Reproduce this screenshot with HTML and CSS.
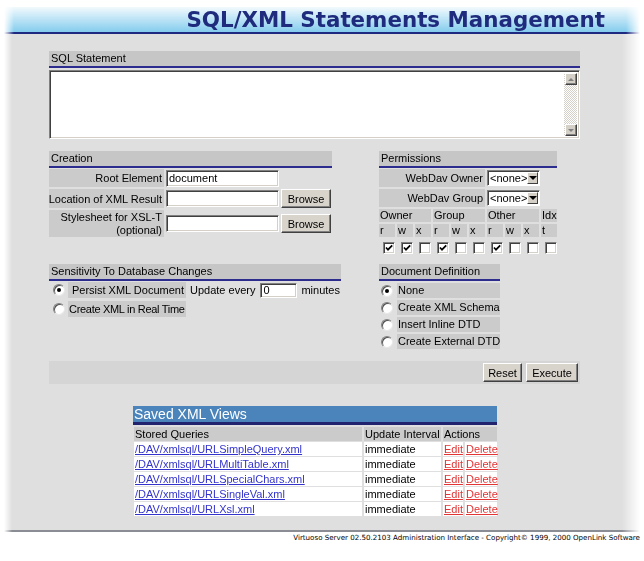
FILE: index.html
```html
<!DOCTYPE html>
<html>
<head>
<meta charset="utf-8">
<title>SQL/XML Statements Management</title>
<link rel="stylesheet" href="styles.css">
</head>
<body>
<div class="header"><h1 class="title">SQL/XML Statements Management</h1></div>
<div class="panel">
  <section class="sql">
    <div class="bar">SQL Statement</div>
    <div class="textarea">
      <textarea class="ta"></textarea>
      <div class="vscroll">
        <span class="sbtn"><span class="tri up"></span></span>
        <span class="track"></span>
        <span class="sbtn"><span class="tri down"></span></span>
      </div>
    </div>
  </section>

  <div class="grid">
    <section class="creation">
      <div class="bar">Creation</div>
      <div class="form">
        <div class="lbl">Root Element</div>
        <div class="cell"><input class="text" value="document"></div>
        <div class="cell"></div>
        <div class="lbl">Location of XML Result</div>
        <div class="cell"><input class="text"></div>
        <div class="cell"><button class="btn browse">Browse</button></div>
        <div class="lbl two">Stylesheet for XSL-T<br>(optional)</div>
        <div class="cell"><input class="text"></div>
        <div class="cell"><button class="btn browse">Browse</button></div>
      </div>
    </section>

    <section class="perms">
      <div class="bar">Permissions</div>
      <div class="perm-grid">
        <div class="pl">WebDav Owner</div>
        <div class="ps"><div class="select"><span class="sv">&lt;none&gt;</span><span class="sa"><span class="tri down dark"></span></span></div></div>
        <div class="pl">WebDav Group</div>
        <div class="ps"><div class="select"><span class="sv">&lt;none&gt;</span><span class="sa"><span class="tri down dark"></span></span></div></div>
        <div class="pc s3">Owner</div>
        <div class="pc s3">Group</div>
        <div class="pc s3">Other</div>
        <div class="pc">Idx</div>
        <div class="pc">r</div><div class="pc">w</div><div class="pc">x</div>
        <div class="pc">r</div><div class="pc">w</div><div class="pc">x</div>
        <div class="pc">r</div><div class="pc">w</div><div class="pc">x</div>
        <div class="pc">t</div>
        <div class="pk"><span class="cb"><svg viewBox="0 0 10 10" width="10" height="10"><path d="M2 4.5 L4 6.7 L8.2 2.3" fill="none" stroke="#000" stroke-width="1.7"/></svg></span></div>
        <div class="pk"><span class="cb"><svg viewBox="0 0 10 10" width="10" height="10"><path d="M2 4.5 L4 6.7 L8.2 2.3" fill="none" stroke="#000" stroke-width="1.7"/></svg></span></div>
        <div class="pk"><span class="cb"></span></div>
        <div class="pk"><span class="cb"><svg viewBox="0 0 10 10" width="10" height="10"><path d="M2 4.5 L4 6.7 L8.2 2.3" fill="none" stroke="#000" stroke-width="1.7"/></svg></span></div>
        <div class="pk"><span class="cb"></span></div>
        <div class="pk"><span class="cb"></span></div>
        <div class="pk"><span class="cb"><svg viewBox="0 0 10 10" width="10" height="10"><path d="M2 4.5 L4 6.7 L8.2 2.3" fill="none" stroke="#000" stroke-width="1.7"/></svg></span></div>
        <div class="pk"><span class="cb"></span></div>
        <div class="pk"><span class="cb"></span></div>
        <div class="pk"><span class="cb"></span></div>
      </div>
    </section>

    <section class="sens">
      <div class="bar">Sensitivity To Database Changes</div>
      <div class="sens-grid">
        <div class="rc"><span class="radio on"></span></div>
        <div class="lbl">Persist XML Document</div>
        <div class="upd">Update every <input class="text small" value="0"> minutes</div>
        <div class="rc"><span class="radio"></span></div>
        <div class="lbl tight">Create XML in Real Time</div>
        <div></div>
      </div>
    </section>

    <section class="docdef">
      <div class="bar">Document Definition</div>
      <div class="dd-grid">
        <div class="rc"><span class="radio on"></span></div><div class="dl">None</div>
        <div class="rc"><span class="radio"></span></div><div class="dl">Create XML Schema</div>
        <div class="rc"><span class="radio"></span></div><div class="dl">Insert Inline DTD</div>
        <div class="rc"><span class="radio"></span></div><div class="dl">Create External DTD</div>
      </div>
    </section>
  </div>

  <div class="actions">
    <button class="btn reset">Reset</button>
    <button class="btn exec">Execute</button>
  </div>

  <section class="saved">
    <div class="saved-title">Saved XML Views</div>
    <div class="saved-grid">
      <div class="sh">Stored Queries</div>
      <div class="sh">Update Interval</div>
      <div class="sh s2">Actions</div>

      <div class="sd"><a href="#">/DAV/xmlsql/URLSimpleQuery.xml</a></div>
      <div class="sd">immediate</div>
      <div class="sd"><a class="red" href="#">Edit</a></div>
      <div class="sd"><a class="red" href="#">Delete</a></div>

      <div class="sd"><a href="#">/DAV/xmlsql/URLMultiTable.xml</a></div>
      <div class="sd">immediate</div>
      <div class="sd"><a class="red" href="#">Edit</a></div>
      <div class="sd"><a class="red" href="#">Delete</a></div>

      <div class="sd"><a href="#">/DAV/xmlsql/URLSpecialChars.xml</a></div>
      <div class="sd">immediate</div>
      <div class="sd"><a class="red" href="#">Edit</a></div>
      <div class="sd"><a class="red" href="#">Delete</a></div>

      <div class="sd"><a href="#">/DAV/xmlsql/URLSingleVal.xml</a></div>
      <div class="sd">immediate</div>
      <div class="sd"><a class="red" href="#">Edit</a></div>
      <div class="sd"><a class="red" href="#">Delete</a></div>

      <div class="sd"><a href="#">/DAV/xmlsql/URLXsl.xml</a></div>
      <div class="sd">immediate</div>
      <div class="sd"><a class="red" href="#">Edit</a></div>
      <div class="sd"><a class="red" href="#">Delete</a></div>
    </div>
  </section>
</div>
<div class="footer">Virtuoso Server 02.50.2103 Administration Interface - Copyright© 1999, 2000 OpenLink Software</div>
</body>
</html>
```

FILE: styles.css
```css
* { box-sizing: border-box; }
body {
  margin: 0;
  background: #fff;
  font-family: "Liberation Sans", Arial, sans-serif;
  font-size: 11px;
  color: #000;
}
.header {
  margin: 7px 4px 0;
  height: 27px;
  background: linear-gradient(#f2fafd, #84ccee);
  border-bottom: 2px solid #1e2a80;
  padding-right: 35px;
  text-align: right;
  -webkit-mask-image: linear-gradient(to right, transparent 0, #000 10px, #000 calc(100% - 14px), transparent 100%);
  mask-image: linear-gradient(to right, transparent 0, #000 10px, #000 calc(100% - 14px), transparent 100%);
}
.title {
  margin: 0;
  font: bold 21.4px/25px "DejaVu Sans", Verdana, sans-serif;
  color: #1f2b7d;
}
.panel {
  margin: 0 4px;
  background: #dfdfdf;
  border-bottom: 2px solid #8a8e94;
  padding: 17px 0 14px 45px;
  -webkit-mask-image: linear-gradient(to right, transparent 0, #000 8px, #000 calc(100% - 18px), transparent 100%);
  mask-image: linear-gradient(to right, transparent 0, #000 8px, #000 calc(100% - 18px), transparent 100%);
}
.bar {
  height: 17px;
  background: #c6c6c6;
  border-bottom: 2px solid #2c2c8e;
  padding: 0 2px;
  line-height: 15px;
}
.sql { width: 531px; }
.textarea {
  margin-top: 2px;
  height: 69px;
  display: flex;
  background: #fff;
  border: 1px solid;
  border-color: #808080 #fff #fff #808080;
  box-shadow: inset 1px 1px #404040, inset -1px -1px #d4d0c8;
  padding: 2px;
}
.ta {
  flex: 1;
  border: 0;
  resize: none;
  outline: none;
  background: transparent;
  font: 11px "Liberation Mono", monospace;
}
.vscroll {
  width: 13px;
  display: flex;
  flex-direction: column;
  align-items: center;
  background: repeating-conic-gradient(#d4d0c8 0 25%, #fff 0 50%) 0 0 / 2px 2px;
}
.track { flex: 1; }
.sbtn {
  width: 12px;
  height: 12px;
  background: #d4d0c8;
  border: 1px solid;
  border-color: #fff #404040 #404040 #fff;
  box-shadow: inset -1px -1px #808080;
  display: flex;
  align-items: center;
  justify-content: center;
}
.tri { width: 0; height: 0; border-left: 3px solid transparent; border-right: 3px solid transparent; }
.tri.up { border-bottom: 3px solid #808080; }
.tri.down { border-top: 3px solid #808080; }
.tri.down.dark { border-top: 4px solid #000; border-left-width: 4px; border-right-width: 4px; }

.grid {
  display: grid;
  grid-template-columns: 293px 178px;
  column-gap: 37px;
  row-gap: 10px;
  margin-top: 12px;
  align-items: start;
}
.creation { width: 283px; }
.form {
  display: grid;
  grid-template-columns: 115px 113px 50px;
  grid-template-rows: 18px 19px 27px;
  gap: 2px;
  margin-top: 1px;
}
.lbl {
  background: #cbcbcb;
  display: flex;
  align-items: center;
  justify-content: flex-end;
  padding-right: 2px;
  text-align: right;
  white-space: nowrap;
}
.lbl.two { line-height: 13px; }
.lbl.tight { justify-content: flex-start; padding: 0 0 0 1px; letter-spacing: -0.3px; }
.cell { display: flex; align-items: center; }
.text {
  width: 113px;
  height: 17px;
  border: 1px solid;
  border-color: #808080 #fff #fff #808080;
  box-shadow: inset 1px 1px #404040, inset -1px -1px #d4d0c8;
  background: #fff;
  padding: 0 2px;
  font: 11px "Liberation Sans", Arial, sans-serif;
  outline: none;
}
.text.small { width: 37px; height: 15px; margin: 0 4px 0 5px; }
.btn {
  height: 19px;
  background: #d8d4cc;
  border: 1px solid;
  border-color: #fff #404040 #404040 #fff;
  box-shadow: inset -1px -1px #808080;
  font: 11px "Liberation Sans", Arial, sans-serif;
  color: #000;
  padding: 0;
}
.browse { width: 50px; }

.perm-grid {
  display: grid;
  grid-template-columns: repeat(10, 16px);
  grid-template-rows: 18px 18px 13px 13px 15px;
  gap: 2px;
  margin-top: 1px;
}
.pl {
  grid-column: span 6;
  background: #cbcbcb;
  display: flex;
  align-items: center;
  justify-content: flex-end;
  padding-right: 2px;
}
.ps { grid-column: span 4; display: flex; align-items: center; }
.select {
  width: 53px;
  height: 16px;
  display: flex;
  background: #fff;
  border: 1px solid;
  border-color: #808080 #fff #fff #808080;
  box-shadow: inset 1px 1px #404040;
  padding: 1px 1px 1px 2px;
  align-items: center;
}
.sv { flex: 1; font-size: 11px; line-height: 12px; }
.sa {
  width: 13px;
  height: 12px;
  background: #d4d0c8;
  border: 1px solid;
  border-color: #fff #404040 #404040 #fff;
  display: flex;
  align-items: center;
  justify-content: center;
}
.pc {
  background: #cbcbcb;
  line-height: 13px;
  padding-left: 1px;
}
.pc.s3 { grid-column: span 3; }
.pk { display: flex; align-items: flex-end; justify-content: flex-end; }
.cb {
  width: 12px;
  height: 12px;
  background: #fff;
  border: 1px solid;
  border-color: #808080 #fff #fff #808080;
  box-shadow: inset 1px 1px #404040, inset -1px -1px #d4d0c8;
  display: flex;
  align-items: center;
  justify-content: center;
}

.sens { width: 292px; }
.sens-grid {
  display: grid;
  grid-template-columns: 17px 118px 1fr;
  grid-template-rows: 16px 16px;
  gap: 3px 2px;
  margin-top: 1px;
}
.rc { display: flex; align-items: center; justify-content: flex-end; padding-right: 1px; }
.radio {
  width: 12px;
  height: 12px;
  border-radius: 50%;
  background: #fff;
  border: 1px solid;
  border-color: #808080 #e8e8e8 #e8e8e8 #808080;
  box-shadow: inset 1px 1px #505050;
  display: flex;
  align-items: center;
  justify-content: center;
}
.radio.on::after {
  content: "";
  width: 4px;
  height: 4px;
  border-radius: 50%;
  background: #000;
}
.upd { display: flex; align-items: center; padding-left: 2px; white-space: nowrap; }

.docdef { width: 121px; }
.dd-grid {
  display: grid;
  grid-template-columns: 16px 103px;
  grid-auto-rows: 15px;
  gap: 2px;
  margin-top: 2px;
}
.dd-grid .rc { justify-content: center; padding: 0; }
.dl { background: #cbcbcb; line-height: 15px; padding-left: 1px; white-space: nowrap; }

.actions {
  margin-top: 12px;
  width: 531px;
  height: 23px;
  background: #d5d5d5;
  display: flex;
  justify-content: flex-end;
  align-items: center;
  gap: 4px;
  padding-right: 2px;
}
.reset { width: 39px; }
.exec { width: 52px; }

.saved { margin: 22px 0 0 84px; width: 364px; }
.saved-title {
  height: 19px;
  background: #4a84ba;
  border-bottom: 3px solid #22236e;
  color: #fff;
  font-size: 14px;
  line-height: 16px;
  padding-left: 1px;
}
.saved-grid {
  display: grid;
  grid-template-columns: 228px 77px 20px 32px;
  grid-auto-rows: 14px;
  column-gap: 2px;
  row-gap: 1px;
  margin: 2px 0 0 1px;
}
.sh { background: #cbcbcb; line-height: 14px; padding-left: 1px; }
.sh.s2 { grid-column: span 2; }
.sd { background: #fff; line-height: 14px; padding-left: 1px; white-space: nowrap; }
.sd a { color: #3434cc; text-decoration: underline; }
.sd a.red { color: #e23434; }

.footer {
  text-align: right;
  padding: 2px 4px 0 0;
  font: 7.1px/8px "DejaVu Sans", Verdana, sans-serif;
  color: #000;
  white-space: nowrap;
}
```
